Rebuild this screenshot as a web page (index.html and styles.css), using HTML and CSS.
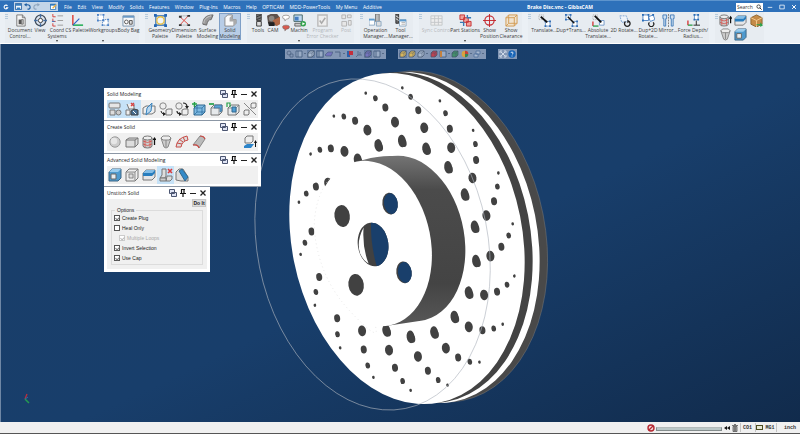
FILE: index.html
```
<!DOCTYPE html>
<html lang="en">
<head>
    <meta charset="UTF-8">
    <meta name="viewport" content="width=device-width, initial-scale=1.0">
    <title>Brake Disc.vnc - GibbsCAM</title>
    <link rel="stylesheet" href="styles.css">
</head>
<body>
    <!-- shared icons -->
    <svg class="sprite" aria-hidden="true">
        <symbol id="doc" viewBox="0 0 14 14"><path d="M3 1h6l3 3v9H3z" fill="#f5f5f5" stroke="#777"/><path d="M9 1v3h3" fill="none" stroke="#777"/><path d="M5 6h3v5H5z" fill="#555"/><path d="M8 6h2v5H8z" fill="#bbb" stroke="#555" stroke-width=".7"/></symbol>
        <symbol id="view" viewBox="0 0 14 14"><circle cx="7" cy="7" r="5.7" fill="#dce4ee" stroke="#46505c" stroke-width="1.3"/><circle cx="7" cy="7" r="2.3" fill="#fff" stroke="#333"/><path d="M7 0v4M7 10v4M0 7h4M10 7h4" stroke="#446ea0" stroke-width="1.5"/></symbol>
        <symbol id="coord" viewBox="0 0 14 14"><path d="M2 0v3h3M2 5v3h3M2 10v3h3" fill="none" stroke="#d43a34"/><path d="M1 8h3" stroke="#3b78c4"/><path d="M7 2h6M7 7h6M7 12h6" stroke="#999"/></symbol>
        <symbol id="cs" viewBox="0 0 14 14"><path d="M2 1v11" stroke="#de3b30" stroke-width="1.5"/><path d="M2 12h11" stroke="#27b05a" stroke-width="1.7"/><path d="M2 12l7-7" stroke="#2f63c4" stroke-width="1.2"/></symbol>
        <symbol id="workgroups" viewBox="0 0 14 14"><path d="M1 1h6v6H1zM6 6h6v6H6z" fill="#fff" stroke="#5f8bc4" stroke-dasharray="1.5 1"/><path d="M0 0h2v2H0zM6 0h2v2H6zM0 6h2v2H0zM6 6h2v2H6zM11 11h2v2h-2zM5 11h2v2H5zM11 5h2v2h-2z" fill="#4c83c8"/></symbol>
        <symbol id="bag" viewBox="0 0 14 14"><path d="M1 2h12v11H1z" fill="#f6f7f8" stroke="#7792ab"/><path d="M1 2h12v2H1z" fill="#6b99c5"/><circle cx="4.7" cy="8.5" r="2" fill="#fff" stroke="#555"/><path d="M8 7h3v4H8z" fill="#ddd" stroke="#555"/></symbol>
        <symbol id="geometry" viewBox="0 0 14 14"><path d="M2 2h10v10H2z" fill="#f8edc4" stroke="#2466b2" stroke-width="1.2"/><circle cx="7" cy="7" r="4" fill="#eff5fa" stroke="#e6bd45" stroke-width="1.5"/><path d="M0 0h3v3H0zM11 0h3v3h-3zM0 11h3v3H0zM11 11h3v3h-3z" fill="#2466b2"/></symbol>
        <symbol id="dimension" viewBox="0 0 14 14"><path d="M2 3l9 8M2 12l9-10" stroke="#e04b43"/><path d="M1 2h3v2H1zM10 1h3v2h-3zM1 11h3v2H1zM10 11h3v2h-3z" fill="#333"/><path d="M3 2h7M3 12h7" stroke="#888" stroke-dasharray="1 1"/></symbol>
        <symbol id="surface" viewBox="0 0 14 14"><path d="M2 11C2 5 5 1 13 1l-2 5c-3 0-4 2-5 6z" fill="#999" stroke="#666"/><path d="M3 10c0-4 3-7 8-8" fill="none" stroke="#ccc"/></symbol>
        <symbol id="solid" viewBox="0 0 14 14"><path d="M1 4l3-3h5v5h4v4l-3 3H1z" fill="#fafafa" stroke="#888"/><path d="M9 1v5h4v4l-3 3V8H6V4z" fill="#aaa"/></symbol>
        <symbol id="tools" viewBox="0 0 14 14"><path d="M5 0h5v7H5z" fill="#777" stroke="#444"/><path d="M5 3l5-2M5 6l5-2M5 8h5v5H5z" fill="#ddd" stroke="#333"/></symbol>
        <symbol id="cam" viewBox="0 0 14 14"><path d="M0 2l4-2h7l3 4-2 8-8 1-3-4z" fill="#5d524d"/><circle cx="5" cy="5" r="3" fill="#8c8883"/><path d="M6 7l8-4v8l-4 2z" fill="#b06846"/><path d="M1 9h7v4H2z" fill="#222"/></symbol>
        <symbol id="chip" viewBox="0 0 14 14"><path d="M1 5q0-3 6-3t6 3q0 4-5 4l-3 3V9Q1 9 1 5z" fill="currentColor" stroke="#6c6460"/></symbol>
        <symbol id="machine" viewBox="0 0 14 14"><path d="M1 1h9v7H1z" fill="#bdd8f0" stroke="#466"/><path d="M2 10h7v3H2z" fill="#ccc" stroke="#666"/><path d="M2 3h4v4H2z" fill="#447ec4"/><circle cx="11" cy="10.5" r="3" fill="#31a24d"/><path d="M10 9l3 1.5-3 1.5z" fill="#fff"/></symbol>
        <symbol id="checker" viewBox="0 0 14 14"><path d="M2 1h10v12H2z" fill="#eee" stroke="#bbb" stroke-width="1.5"/><path d="M4 7l2 3 4-6" fill="none" stroke="#aaa" stroke-width="1.6"/></symbol>
        <symbol id="post" viewBox="0 0 14 14"><path d="M2 1h4v4H2zM8 1h4v3H8zM2 8h5v5H2zM9 7h3v5H9z" fill="#e7e7e7" stroke="#b2b2b2"/></symbol>
        <symbol id="operation" viewBox="0 0 14 14"><path d="M7 0h4v8H7z" fill="#bbb" stroke="#777"/><path d="M0 6h6v6H0z" fill="#fff" stroke="#8ca9c2"/><path d="M0 5h6v2H0z" fill="#5c9bcf"/><path d="M8 8h5v5H8z" fill="#ddd" stroke="#8ca9c2"/></symbol>
        <symbol id="toolmanager" viewBox="0 0 14 14"><path d="M2 0h3v10H2z" fill="#666" stroke="#333"/><path d="M2 2l3 2M2 5l3 2" stroke="#eee"/><path d="M6 6h7v7H6z" fill="#fff" stroke="#8ca9c2"/><path d="M6 6h7v2H6z" fill="#5c9bcf"/><path d="M8 9h4M8 11h4" stroke="#aaa"/></symbol>
        <symbol id="sync" viewBox="0 0 14 14"><path d="M1 2h12v10H1zM1 5h12M1 9h12M5 2v10M9 2v10" fill="#eee" stroke="#c4c7c9"/></symbol>
        <symbol id="stations" viewBox="0 0 14 14"><path d="M1 1h5v5H1zM5 4h5v5H5zM8 8h5v5H8z" fill="#f0a19b" stroke="#c73032"/><path d="M1 9h4v4M9 1v3h4" fill="none" stroke="#3979b4" stroke-width="1.5"/></symbol>
        <symbol id="position" viewBox="0 0 14 14"><circle cx="7" cy="7" r="5" fill="none" stroke="#c4252b" stroke-width="1.2"/><path d="M7 0v14M0 7h14" stroke="#c4252b"/></symbol>
        <symbol id="clearance" viewBox="0 0 14 14"><path d="M1 4l3-3h9v9l-3 3H1zM1 4h9v9M10 4l3-3M4 1v9h9M4 10l-3 3" fill="#f6deb9" fill-opacity=".6" stroke="#d29b51"/></symbol>
        <symbol id="translate" viewBox="0 0 14 14"><path d="M1 1h5v5H1z" fill="none" stroke="#aaa" stroke-dasharray="1 1"/><path d="M8 8h5v5H8z" fill="#fff" stroke="#7198c8"/><path d="M7 7h2v2H7zM12 7h2v2h-2zM7 12h2v2H7zM12 12h2v2h-2z" fill="#356fb5"/><path d="M3 3l7 6" stroke="#111" stroke-width="2"/></symbol>
        <symbol id="duplicate" viewBox="0 0 14 14"><path d="M1 1h5v5H1zM8 8h5v5H8z" fill="#fff" stroke="#7198c8"/><path d="M0 0h2v2H0zM5 0h2v2H5zM0 5h2v2H0zM7 12h2v2H7zM12 7h2v2h-2zM12 12h2v2h-2z" fill="#356fb5"/><path d="M3 3l7 7" stroke="#111" stroke-width="1.7"/></symbol>
        <symbol id="absolute" viewBox="0 0 14 14"><path d="M1 1h5v5H1z" fill="none" stroke="#aaa" stroke-dasharray="1 1"/><path d="M8 7h5v5H8z" fill="#fff" stroke="#7198c8"/><path d="M3 2l7 7" stroke="#111" stroke-width="2"/><path d="M1 8v5" stroke="#d52f2f" stroke-width="1.4"/><path d="M1 13h6" stroke="#2b9d49" stroke-width="1.4"/></symbol>
        <symbol id="rotate" viewBox="0 0 14 14"><path d="M2 2h7l2 6-7 1z" fill="#edf3fa" stroke="#78a0d0" stroke-dasharray="2 1"/><path d="M8 8a3 3 0 1 0 4 0" fill="none" stroke="#222" stroke-width="1.4"/><path d="M10 6l3 2-3 2z" fill="#222"/></symbol>
        <symbol id="duprotate" viewBox="0 0 14 14"><path d="M1 1h6v6H1zM7 3l5-2 2 5-5 2z" fill="#fff" stroke="#4f83c2"/><path d="M0 0h2v2H0zM6 0h2v2H6zM0 6h2v2H0zM11 0h2v2h-2z" fill="#286db7"/><path d="M8 9a2.7 2.7 0 1 0 4 0" fill="none" stroke="#222" stroke-width="1.3"/></symbol>
        <symbol id="mirror" viewBox="0 0 14 14"><path d="M1 1h4v4H4v8H2V5H1zM9 1h4v4h-1v8h-2V5H9z" fill="#cfe0f1" stroke="#427cba"/><path d="M7 0v14" stroke="#777" stroke-dasharray="2 1"/></symbol>
        <symbol id="depth" viewBox="0 0 14 14"><path d="M8 1h4v5H8z" fill="#fff" stroke="#6995c7"/><path d="M7 0h2v2H7zM11 0h2v2h-2zM7 5h2v2H7zM11 5h2v2h-2z" fill="#286db7"/><path d="M7 12h7M10 7v5" stroke="#222"/><path d="M1 7v5" stroke="#d52f2f" stroke-width="1.4"/><path d="M1 12h5" stroke="#2b9d49" stroke-width="1.4"/></symbol>

        <!-- solid operations -->
        <symbol id="extrude" viewBox="0 0 14 14"><path d="M1 3v8q0 2 4.500 2t4.500-2V3z" fill="#ccc" stroke="#777"/><ellipse cx="5.500" cy="3" rx="4.500" ry="2" fill="#eee" stroke="#777"/><path d="M1 6q4.500 3 9 0M1 9q4.500 3 9 0M3 5v7M8 5v7" fill="none" stroke="#d34d47" stroke-width=".8"/><path d="M12.500 10V4" stroke="#111" stroke-width="1.3"/><path d="M10.500 5l2-3 2 3z" fill="#111"/></symbol>
        <symbol id="loft" viewBox="0 0 14 14"><path d="M2 3l3 9q2 2 4 0l3-9z" fill="#ccc" stroke="#888"/><path d="M2 3l2-2h6l2 2-2 2H4zM7 5v7" fill="#eee" stroke="#888"/></symbol>
        <symbol id="slice" viewBox="0 0 14 14"><path d="M1 5l3-3h9v7l-3 3H1z" fill="#e4e5e7" stroke="#777"/><path d="M1 5l3-3h9l-3 3z" fill="#83bde7"/><path d="M1 5h9v3H1zM10 5l3-3v3l-3 3z" fill="#277dbe"/></symbol>
        <symbol id="box" viewBox="0 0 14 14"><path d="M1 4l6-3 6 3v7l-6 3-6-3z" fill="#c58b48" stroke="#8d642f"/><path d="M1 4l6 3 6-3M7 7v7" fill="none" stroke="#f4cc91"/><path d="M7 11h4V9l3 3-3 2v-2H7z" fill="#29a14b"/></symbol>
        <symbol id="shell" viewBox="0 0 14 14"><path d="M1 4l3-3h9v9l-3 3H1z" fill="#4f9ace" stroke="#3d6785"/><path d="M1 4l3-3h9l-3 3z" fill="#9acced"/><path d="M3 6h5v5H3z" fill="#e9edf0" stroke="#666"/></symbol>
        <symbol id="shapes" viewBox="0 0 14 14"><rect x="1" y="1" width="11" height="5" rx="1" fill="#e6e6e6" stroke="#777"/><path d="M2 8h5v5H2z" fill="#ddd" stroke="#777"/><circle cx="10.500" cy="10.500" r="2.500" fill="#ccc" stroke="#777"/></symbol>
        <symbol id="stitch" viewBox="0 0 14 14"><path d="M2 2l2 5h5V2M1 8h4v5H1z" fill="#eee" stroke="#777"/><path d="M6 1l3 3M9 1L6 4" stroke="#d84443" stroke-width="1.4"/><path d="M6 9l3-2 4 1v5H6z" fill="#456d91" stroke="#444"/><path d="M8 9l3 3" stroke="#fff"/></symbol>
        <symbol id="cutplane" viewBox="0 0 14 14"><path d="M1 6l3-2h9v6l-3 2H1z" fill="#eee" stroke="#777"/><path d="M4 13l1-7 5-5-1 8z" fill="#9acaf0" fill-opacity=".6" stroke="#3984be"/></symbol>
        <symbol id="replace" viewBox="0 0 14 14"><circle cx="4" cy="4" r="3.200" fill="#eee" stroke="#888"/><path d="M7 8l2-1h4v5l-1 1H7z" fill="#eee" stroke="#777"/><path d="M2 9q0 3 4 3" fill="none" stroke="#222"/><path d="M4 10l3 2-3 2z" fill="#222"/></symbol>
        <symbol id="swap" viewBox="0 0 14 14"><circle cx="4" cy="4" r="3.200" fill="#eee" stroke="#888"/><path d="M7 8l2-1h4v5l-1 1H7z" fill="#eee" stroke="#777"/><path d="M2 9q0 3 4 3M8 1q4 0 4 4" fill="none" stroke="#222" stroke-width="1.200"/><path d="M4 10l3 2-3 2zM10 4h4l-2 3z" fill="#222"/></symbol>
        <symbol id="union" viewBox="0 0 14 14"><path d="M2 6l3-3h8v7l-3 3H2z" fill="#7fbae2" stroke="#33698f"/><path d="M5 3v7h8M5 10l-3 3M2 6h8v7M10 6l3-3" fill="none" stroke="#24659a" stroke-width=".7"/><path d="M0 2h5M2.500 0v5" stroke="#25a148" stroke-width="1.500"/></symbol>
        <symbol id="subtract" viewBox="0 0 14 14"><path d="M2 6l3-3h8v7l-3 3H2z" fill="#e6e9eb" stroke="#777"/><path d="M2 6h8v7M10 6l3-3" fill="none" stroke="#777" stroke-width=".7"/><path d="M6 3h7v6l-2 1V6H5z" fill="#5ca3d5" stroke="#33698f" stroke-width=".7"/><path d="M0 2h5" stroke="#25a148" stroke-width="1.700"/></symbol>
        <symbol id="intersect" viewBox="0 0 14 14"><path d="M2 6l3-3h8v7l-3 3H2z" fill="#e6e9eb" stroke="#777"/><path d="M2 6h8v7M10 6l3-3" fill="none" stroke="#777" stroke-width=".7"/><path d="M6 5h4v5H6z" fill="#4f9ed5" stroke="#33698f"/><path d="M1 5V1h3v4" fill="none" stroke="#25a148" stroke-width="1.200"/></symbol>
        <symbol id="separate" viewBox="0 0 14 14"><path d="M8 2l1-1h4v4l-1 1H8zM1 9l1-1h4v4l-1 1H1z" fill="#eee" stroke="#777"/><path d="M1 1l12 12" stroke="#888"/></symbol>
        <symbol id="sphere" viewBox="0 0 14 14"><circle cx="7" cy="7" r="5.200" fill="#ccc" stroke="#999"/><circle cx="6" cy="6" r="3.200" fill="#e6e6e6"/></symbol>
        <symbol id="cuboid" viewBox="0 0 14 14"><path d="M1 5l3-2h9v6l-3 3H1z" fill="#ddd" stroke="#777"/><path d="M1 5h9v7M10 5l3-2" fill="none" stroke="#777"/></symbol>
        <symbol id="sweep" viewBox="0 0 14 14"><path d="M1 12Q2 3 12 1l1 4Q7 6 6 12z" fill="#ddd" stroke="#c74b47"/><path d="M2 8l5 1M4 4l4 3M8 2l2 4" stroke="#c74b47"/></symbol>
        <symbol id="trough" viewBox="0 0 14 14"><path d="M1 10l7-9q4 0 5 3l-6 9q-1-4-6-3z" fill="#bbb" stroke="#888"/><path d="M1 10q5-1 6 3M8 1q4 0 5 3" fill="none" stroke="#cc4b46" stroke-width="1.200"/></symbol>
        <symbol id="fromsheet" viewBox="0 0 14 14"><path d="M2 3l2-2h6v5L8 8H2z" fill="#eee" stroke="#777"/><path d="M1 11l3-2h7l-3 4H1z" fill="#2c84c9"/><path d="M12.500 12V7" stroke="#111"/><path d="M11 8l1.500-3L14 8z" fill="#111"/></symbol>
        <symbol id="offset" viewBox="0 0 14 14"><path d="M1 4l3-3h9v9l-3 3H1z" fill="#eee" stroke="#777"/><path d="M1 4h9v9M10 4l3-3M4 6h4v4H4z" fill="#ddd" stroke="#777" stroke-width=".8"/></symbol>
        <symbol id="unstitch" viewBox="0 0 14 14"><path d="M3 1h4v7l-1 2H1l2-3zM8 8h5v3l-2 2H7z" fill="#ddd" stroke="#777"/><path d="M1 10h6v3H1z" fill="#ccc" stroke="#777"/><path d="M9 1l4 4M13 1L9 5" stroke="#d83b3b" stroke-width="1.600"/></symbol>
        <symbol id="chamfer" viewBox="0 0 14 14"><path d="M1 12V4l3-3h4l5 8v4H6z" fill="#ddd" stroke="#777"/><path d="M4 3l3-2 6 8-3 4z" fill="#348ac8" stroke="#31698f"/></symbol>

        <!-- window parts -->
        <symbol id="copy" viewBox="0 0 8 8"><path d="M.5.500h5v4h-5zM2.500 3.500h5v4h-5z" fill="#dfe4f4" stroke="#4b5571"/></symbol>
        <symbol id="pin" viewBox="0 0 8 8"><path d="M2 .500h4M2.500.500v4M5 .500v4M1 4.500h6M4 5v3" fill="none" stroke="#111" stroke-width="1.200"/></symbol>
        <symbol id="minimize" viewBox="0 0 8 8"><path d="M1 4.500h6" stroke="currentColor"/></symbol>
        <symbol id="maximize" viewBox="0 0 8 8"><path d="M1 1.500h6v5H1z" fill="none" stroke="currentColor"/></symbol>
        <symbol id="close" viewBox="0 0 8 8"><path d="M1.500 1.500l5 5M6.500 1.500l-5 5" stroke="currentColor" stroke-width="1.300"/></symbol>
        <symbol id="save" viewBox="0 0 8 8"><path d="M.5.500h7v7h-7z" fill="#f7fafc" stroke="#235f9f"/><path d="M1 1h6v2H1zM2 5h4v3H2z" fill="#387fc0"/></symbol>
        <symbol id="undo" viewBox="0 0 8 8"><path d="M2 2h2q3 0 3 3 0 2-3 2" fill="none" stroke="currentColor" stroke-width="1.300"/><path d="M3 0v4L0 2z" fill="currentColor"/></symbol>
        <symbol id="redo" viewBox="0 0 8 8"><path d="M6 2H4Q1 2 1 5q0 2 3 2" fill="none" stroke="currentColor" stroke-width="1.300"/><path d="M5 0v4l3-2z" fill="currentColor"/></symbol>
        <symbol id="edit" viewBox="0 0 8 8"><path d="M.5 1.500h6v6h-6z" fill="#fff" stroke="#337abb"/><path d="M0 1h7v2H0z" fill="#337abb"/><path d="M3 6l4-4" stroke="#efb241" stroke-width="1.500"/></symbol>

        <!-- canvas toolbar -->
        <symbol id="link" viewBox="0 0 8 8"><circle cx="3" cy="3" r="2" fill="none" stroke="#4f6585" stroke-width=".8"/><path d="M4 4h3v3H4z" fill="none" stroke="#4f6585" stroke-width=".8"/></symbol>
        <symbol id="frame" viewBox="0 0 8 8"><path d="M1 1h6v6H1zM3 1v6" fill="#9aacc6" stroke="#3f587b" stroke-width=".8"/></symbol>
        <symbol id="orange" viewBox="0 0 8 8"><path d="M1 1h6v6H1z" fill="#9aacc6" stroke="#3f587b" stroke-width=".8"/><path d="M1 1h2v6H1z" fill="#c4813f"/></symbol>
        <symbol id="sheet" viewBox="0 0 8 8"><path d="M0 5l3-3h5L6 6H1z" fill="currentColor" stroke="#455a7a" stroke-width=".6"/></symbol>
        <symbol id="windows" viewBox="0 0 8 8"><path d="M3 1h4v3H3zM1 4h4v3H1z" fill="#a7b8cf" stroke="#4f6f9c" stroke-width=".8"/></symbol>
        <symbol id="corner" viewBox="0 0 8 8"><path d="M1 2h5v5" fill="none" stroke="#4f6585"/></symbol>
        <symbol id="axes" viewBox="0 0 8 8"><path d="M3 1v4h4M3 5L1 7M5 2v3" fill="none" stroke="#4f6585" stroke-width=".8"/></symbol>
        <symbol id="flag" viewBox="0 0 8 8"><path d="M1 1h3v6H1z" fill="#2d61a8"/><path d="M3 1h4v4H3z" fill="#c42f3c"/></symbol>
        <symbol id="cube" viewBox="0 0 8 8"><path d="M1 3l2-2h4v4L5 7H1z" fill="currentColor" stroke="#43536a" stroke-width=".7"/><path d="M1 3h4v4M5 3l2-2" fill="none" stroke="#43536a" stroke-width=".5"/></symbol>
        <symbol id="ball" viewBox="0 0 8 8"><circle cx="4" cy="4" r="3.300" fill="#d8a23e"/><path d="M4 4V.700A3.300 3.300 0 0 1 7.300 4z" fill="#c2413c"/><path d="M4 4h3.300A3.300 3.300 0 0 1 4 7.300z" fill="#35855b"/></symbol>
        <symbol id="fit" viewBox="0 0 8 8"><path d="M1 3V1h2M5 1h2v2M7 5v2H5M3 7H1V5M2 2l4 4M6 2L2 6" fill="none" stroke="#e2eaf4" stroke-width=".8"/></symbol>
        <symbol id="help" viewBox="0 0 8 8"><circle cx="4" cy="4" r="3.700" fill="#1764b7"/><path d="M3 3q0-1 1-1t1 1q0 1-1 1.500M4 5.500v1" fill="none" stroke="#fff" stroke-width=".8"/></symbol>
    </svg>

    <header class="titlebar">
        <svg class="logo" viewBox="0 0 8 8"><path d="M6 2.500A2.500 2.500 0 1 0 6.300 5H4" fill="none" stroke="#fff" stroke-width="1.400"/></svg>
        <div class="quick">
            <button aria-label="Save"><svg><use href="#save"/></svg></button>
            <button aria-label="Undo"><svg><use href="#undo"/></svg></button>
            <button class="faded" aria-label="Redo"><svg><use href="#redo"/></svg></button>
            <button class="last" aria-label="Edit"><svg><use href="#edit"/></svg></button>
        </div>
        <nav class="menu">
            <a href="#">File</a><a href="#">Edit</a><a href="#">View</a><a href="#">Modify</a><a href="#">Solids</a><a href="#">Features</a><a href="#">Window</a><a href="#">Plug-Ins</a><a href="#">Macros</a><a href="#">Help</a><a href="#">OPTICAM</a><a href="#">MDD-PowerTools</a><a href="#">My Menu</a><a href="#">Additive</a>
        </nav>
        <div class="file-name">Brake Disc.vnc - GibbsCAM</div>
        <label class="search"><input type="text" placeholder="Search" aria-label="Search"><svg viewBox="0 0 8 8"><circle cx="3.500" cy="3.500" r="2.300" fill="none" stroke="#222"/><path d="M5.200 5.200L7.500 7.500" stroke="#222" stroke-width="1.200"/></svg></label>
        <div class="window-buttons">
            <button aria-label="Minimize"><svg><use href="#minimize"/></svg></button>
            <button aria-label="Maximize"><svg><use href="#maximize"/></svg></button>
            <button aria-label="Close"><svg><use href="#close"/></svg></button>
        </div>
    </header>

    <div class="ribbon">
        <div class="group group-view">
            <i class="grip"></i>
            <button class="tool"><svg><use href="#doc"/></svg>Document<br>Control...</button>
            <button class="tool"><svg><use href="#view"/></svg>View</button>
            <button class="tool drop"><svg><use href="#coord"/></svg>Coord<br>Systems</button>
            <button class="tool"><svg><use href="#cs"/></svg>CS Palette</button>
            <button class="tool drop"><svg><use href="#workgroups"/></svg>Workgroups</button>
            <button class="tool"><svg><use href="#bag"/></svg>Body Bag</button>
        </div>
        <div class="group group-palettes">
            <i class="grip"></i>
            <button class="tool"><svg><use href="#geometry"/></svg>Geometry<br>Palette</button>
            <button class="tool"><svg><use href="#dimension"/></svg>Dimension<br>Palette</button>
            <button class="tool"><svg><use href="#surface"/></svg>Surface<br>Modeling</button>
            <button class="tool active"><svg><use href="#solid"/></svg>Solid<br>Modeling</button>
        </div>
        <div class="group group-machine">
            <i class="grip"></i>
            <button class="tool"><svg><use href="#tools"/></svg>Tools</button>
            <button class="tool"><svg><use href="#cam"/></svg>CAM</button>
            <div class="chips">
                <button aria-label="Comment"><svg><use href="#chip"/></svg></button>
                <button class="red" aria-label="Remove comment"><svg><use href="#chip"/></svg></button>
            </div>
            <button class="tool drop"><svg><use href="#machine"/></svg>Machin</button>
            <button class="tool" disabled><svg><use href="#checker"/></svg>Program<br>Error Checker</button>
            <button class="tool" disabled><svg><use href="#post"/></svg>Post</button>
        </div>
        <div class="group group-managers">
            <i class="grip"></i>
            <button class="tool"><svg><use href="#operation"/></svg>Operation<br>Manager...</button>
            <button class="tool"><svg><use href="#toolmanager"/></svg>Tool<br>Manager...</button>
        </div>
        <div class="group group-stations">
            <i class="grip"></i>
            <button class="tool" disabled><svg><use href="#sync"/></svg>Sync Control</button>
            <button class="tool drop"><svg><use href="#stations"/></svg>Part Stations</button>
            <button class="tool"><svg><use href="#position"/></svg>Show<br>Position</button>
            <button class="tool"><svg><use href="#clearance"/></svg>Show<br>Clearance</button>
        </div>
        <div class="group group-transform">
            <i class="grip"></i>
            <button class="tool"><svg><use href="#translate"/></svg>Translate...</button>
            <button class="tool"><svg><use href="#duplicate"/></svg>Dup+Trans...</button>
            <button class="tool"><svg><use href="#absolute"/></svg>Absolute<br>Translate...</button>
            <button class="tool"><svg><use href="#rotate"/></svg>2D Rotate...</button>
            <button class="tool"><svg><use href="#duprotate"/></svg>Dup+2D<br>Rotate...</button>
            <button class="tool"><svg><use href="#mirror"/></svg>Mirror...</button>
            <button class="tool"><svg><use href="#depth"/></svg>Force Depth/<br>Radius...</button>
        </div>
        <div class="group group-solids">
            <i class="grip"></i>
            <div class="solids">
                <button aria-label="Extrude"><svg><use href="#extrude"/></svg></button>
                <button aria-label="Slice"><svg><use href="#slice"/></svg></button>
                <button aria-label="Export solid"><svg><use href="#box"/></svg></button>
                <button aria-label="Loft"><svg><use href="#loft"/></svg></button>
                <button aria-label="Shell"><svg><use href="#shell"/></svg></button>
            </div>
        </div>
    </div>

    <main class="workspace">
        <svg class="model" viewBox="0 43 800 379" role="img" aria-label="Brake disc">
            <defs>
                <ellipse id="rim" rx="115.600" ry="167.700" transform="rotate(-11.250)"/>
                <ellipse id="hub" rx="57.800" ry="83.800" transform="rotate(-11.250)"/>
                <linearGradient id="hubShade" x1="0" y1="0" x2="0" y2="1">
                    <stop offset="0" stop-color="#747474"/>
                    <stop offset=".2" stop-color="#4b4b4b"/>
                    <stop offset=".75" stop-color="#444"/>
                    <stop offset="1" stop-color="#585858"/>
                </linearGradient>
                <clipPath id="bore"><ellipse cx="373" cy="244" rx="15.300" ry="22" transform="rotate(-8 373 244)"/></clipPath>
            </defs>

            <g transform="translate(430 236)"><use href="#rim" fill="#494949" stroke="#777" stroke-width=".5"/></g>
            <g transform="translate(422 237)"><use href="#rim" fill="#fff"/></g>
            <g transform="translate(415 237)"><use href="#rim" fill="#434343"/></g>
            <g transform="translate(407 238)"><use href="#rim" fill="#fff"/></g>
            <g id="holes" fill="#414141" transform="translate(250 60) scale(.3333)"></g>

            <path d="M358.500 160.400L364 159q15-4 28-3.600A57.800 83.800 -11.250 0 1 421 320.600L387.500 325.600z" fill="url(#hubShade)"/>
            <g transform="translate(373 243)"><use href="#hub" fill="#fff"/></g>
            <path d="M329 178Q314 198 314 228Q318 277 350 311T375 325" fill="none" stroke="#ddd" stroke-width=".7" stroke-dasharray="1 3"/>

            <g fill="#414141">
                <ellipse cx="342" cy="215.500" rx="7.700" ry="11" transform="rotate(-8 342 215.500)"/>
                <ellipse cx="356" cy="284.500" rx="7.700" ry="11" transform="rotate(-8 356 284.500)"/>
                <ellipse cx="390" cy="203" rx="7.700" ry="11" transform="rotate(-8 390 203)"/>
                <ellipse cx="404" cy="272" rx="7.700" ry="11" transform="rotate(-8 404 272)"/>
            </g>
            <g fill="#193f6b">
                <ellipse cx="390.800" cy="203" rx="6.900" ry="10.500" transform="rotate(-8 390.800 203)"/>
                <ellipse cx="404.800" cy="272" rx="6.900" ry="10.500" transform="rotate(-8 404.800 272)"/>
            </g>
            <g clip-path="url(#bore)">
                <path d="M350 215h50v60h-50z" fill="#414141"/>
                <path d="M363.500 227Q356 241 360 253Q363 260 368.500 263Q362 247 363.500 227z" fill="#fff"/>
                <path d="M371 218Q370 246 378 270H400V218z" fill="#193f6b"/>
            </g>
            <g transform="translate(372.500 244)"><use href="#rim" fill="none" stroke="#aeb4bd" stroke-width=".6"/></g>

            <path d="M26 394l-2 5" stroke="#bd2f3b" stroke-width="1.300"/>
            <path d="M24 399l4 4" stroke="#259b50" stroke-width="1.500"/>
            <path d="M24 399l3-2" stroke="#3268a5"/>
        </svg>

        <div class="floating-bars">
            <div class="bar bar-select">
                <svg><use href="#link"/></svg><svg><use href="#frame"/></svg><i></i>
                <svg class="on"><use href="#cube"/></svg><svg class="on"><use href="#frame"/></svg>
                <svg class="violet"><use href="#sheet"/></svg><svg><use href="#corner"/></svg><i></i>
                <svg><use href="#flag"/></svg><svg><use href="#axes"/></svg>
                <svg class="on violet"><use href="#cube"/></svg><svg><use href="#frame"/></svg><i></i>
            </div>
            <div class="bar bar-shade">
                <svg class="on gold"><use href="#cube"/></svg><svg class="gold"><use href="#cube"/></svg><svg><use href="#cube"/></svg><i></i>
                <svg class="red"><use href="#cube"/></svg><svg><use href="#orange"/></svg><i></i>
                <svg class="green"><use href="#cube"/></svg><svg><use href="#ball"/></svg><i></i>
                <svg><use href="#windows"/></svg><i></i>
            </div>
            <div class="bar bar-help">
                <svg><use href="#fit"/></svg><svg><use href="#help"/></svg>
            </div>
        </div>

        <div class="panels">
            <section class="panel">
                <header><h2>Solid Modeling</h2>
                    <button aria-label="Copy"><svg><use href="#copy"/></svg></button><button aria-label="Pin"><svg><use href="#pin"/></svg></button><button aria-label="Minimize"><svg><use href="#minimize"/></svg></button><button aria-label="Close"><svg><use href="#close"/></svg></button>
                </header>
                <div class="palette">
                    <button class="active" aria-label="Create solid"><svg><use href="#shapes"/></svg></button>
                    <button class="active" aria-label="Advanced solid modeling"><svg><use href="#stitch"/></svg></button>
                    <button aria-label="Slice"><svg><use href="#cutplane"/></svg></button>
                    <button aria-label="Replace"><svg><use href="#replace"/></svg></button>
                    <button aria-label="Swap"><svg><use href="#swap"/></svg></button>
                    <button aria-label="Union"><svg><use href="#union"/></svg></button>
                    <button aria-label="Subtract"><svg><use href="#subtract"/></svg></button>
                    <button aria-label="Intersect"><svg><use href="#intersect"/></svg></button>
                    <button aria-label="Separate"><svg><use href="#separate"/></svg></button>
                </div>
            </section>
            <section class="panel">
                <header><h2>Create Solid</h2>
                    <button aria-label="Copy"><svg><use href="#copy"/></svg></button><button aria-label="Pin"><svg><use href="#pin"/></svg></button><button aria-label="Minimize"><svg><use href="#minimize"/></svg></button><button aria-label="Close"><svg><use href="#close"/></svg></button>
                </header>
                <div class="palette">
                    <button aria-label="Sphere"><svg><use href="#sphere"/></svg></button>
                    <button aria-label="Cuboid"><svg><use href="#cuboid"/></svg></button>
                    <button aria-label="Extrude"><svg><use href="#extrude"/></svg></button>
                    <button aria-label="Loft"><svg><use href="#loft"/></svg></button>
                    <button aria-label="Sweep"><svg><use href="#sweep"/></svg></button>
                    <button aria-label="Swept surface"><svg><use href="#trough"/></svg></button>
                    <button class="end" aria-label="Solid from sheet"><svg><use href="#fromsheet"/></svg></button>
                </div>
            </section>
            <section class="panel">
                <header><h2>Advanced Solid Modeling</h2>
                    <button aria-label="Copy"><svg><use href="#copy"/></svg></button><button aria-label="Pin"><svg><use href="#pin"/></svg></button><button aria-label="Minimize"><svg><use href="#minimize"/></svg></button><button aria-label="Close"><svg><use href="#close"/></svg></button>
                </header>
                <div class="palette">
                    <button aria-label="Shell"><svg><use href="#shell"/></svg></button>
                    <button aria-label="Offset"><svg><use href="#offset"/></svg></button>
                    <button aria-label="Slice"><svg><use href="#slice"/></svg></button>
                    <button class="active" aria-label="Unstitch"><svg><use href="#unstitch"/></svg></button>
                    <button aria-label="Chamfer"><svg><use href="#chamfer"/></svg></button>
                </div>
            </section>
            <section class="panel dialog">
                <header><h2>Unstitch Solid</h2>
                    <button aria-label="Copy"><svg><use href="#copy"/></svg></button><button aria-label="Pin"><svg><use href="#pin"/></svg></button><button aria-label="Minimize"><svg><use href="#minimize"/></svg></button><button aria-label="Close"><svg><use href="#close"/></svg></button>
                </header>
                <form class="dialog-body">
                    <button class="do-it" type="button">Do It</button>
                    <fieldset>
                        <legend>Options</legend>
                        <label><input type="checkbox" checked>Create Plug</label>
                        <label><input type="checkbox">Heal Only</label>
                        <label class="sub"><input type="checkbox" checked disabled>Multiple Loops</label>
                        <label><input type="checkbox" checked>Invert Selection</label>
                        <label><input type="checkbox" checked>Use Cap</label>
                    </fieldset>
                </form>
            </section>
        </div>
    </main>

    <footer class="statusbar">
        <svg viewBox="0 0 8 8"><circle cx="4" cy="4" r="3" fill="#f3dcdc" stroke="#b52831" stroke-width="1.400"/><path d="M2 6l4-4" stroke="#b52831" stroke-width="1.300"/></svg>
        <div class="progress"></div>
        <svg viewBox="0 0 8 8"><path d="M1 4l3-2v4zM4 4l3-2v4z" fill="#111"/></svg>
        <svg viewBox="0 0 8 8"><path d="M1 1.500h6M3 .500h2M2 2.500h4v5H2zM3.300 3v4M4.700 3v4" fill="#bbb" stroke="#555" stroke-width=".8"/></svg>
        <span class="cell cs">CO1</span>
        <span class="cell mg"><i></i>MG1</span>
        <span class="cell unit">inch</span>
    </footer>
    <script src="script.js"></script>
</body>
</html>
```

FILE: styles.css
```
* {
    box-sizing: border-box;
}
body {
    margin: 0;
    height: 100vh;
    display: flex;
    flex-direction: column;
    font-family: "Open Sans", "Noto Sans", sans-serif;
    font-size: 5px;
    line-height: 6px;
    color: #333;
    background-color: #f0f0f0;
    overflow: hidden;
}
button {
    padding: 0;
    border: 0;
    background: none;
    font: inherit;
    color: inherit;
    display: flex;
    align-items: center;
    justify-content: center;
}
svg {
    display: block;
    flex: none;
}
.sprite {
    display: none;
}

/* title bar */
.titlebar {
    position: relative;
    flex: none;
    height: 12px;
    display: flex;
    align-items: center;
    background-color: #2e71ba;
    border-top: 1px solid #5d94cd;
    color: #fff;
}
.logo {
    width: 6px;
    height: 6px;
    margin: 0 5px 0 3px;
}
.quick {
    width: 44px;
    height: 9px;
    display: flex;
    align-items: center;
    gap: 2px;
    padding: 0 1px;
    background-color: #c3d5e8;
    color: #1b5ca2;
}
.quick svg {
    width: 7px;
    height: 7px;
}
.quick .faded {
    color: #8ea4bd;
}
.quick .last {
    margin-left: auto;
}
.menu {
    width: 318px;
    display: flex;
    justify-content: space-between;
    margin-left: 6px;
    white-space: nowrap;
}
.menu a {
    color: #fff;
    text-decoration: none;
}
.file-name {
    position: absolute;
    left: 0;
    right: 0;
    padding-left: 40%;
    text-align: center;
    font-weight: bold;
    pointer-events: none;
}
.search {
    width: 27px;
    height: 8px;
    display: flex;
    align-items: center;
    margin-left: auto;
    padding: 0 1px;
    background-color: #fff;
}
.search input {
    flex: 1;
    min-width: 0;
    padding: 0;
    border: 0;
    background: none;
    font: inherit;
}
.search input::placeholder {
    color: #333;
}
.search svg {
    width: 6px;
    height: 6px;
}
.window-buttons {
    display: flex;
    gap: 6px;
    margin: 0 3px 0 4px;
}
.window-buttons svg {
    width: 6px;
    height: 6px;
}

/* ribbon */
.ribbon {
    flex: none;
    height: 32px;
    display: flex;
    gap: 6px;
    padding: 0 5px;
    background-color: #ebf0f5;
    border-bottom: 1px solid #fff;
    color: #3d3d40;
}
.group {
    display: grid;
    padding-top: 1px;
    background-color: #e7ecf1;
}
.group-view {
    grid-template-columns: 3px 24px 16px 18px 22px 30px 21px;
}
.group-palettes {
    grid-template-columns: 3px 24px 24px 23px 22px;
}
.group-machine {
    grid-template-columns: 3px 16px 14px 11px 16px 31px 16px;
}
.group-managers {
    grid-template-columns: 3px 25px 25px;
}
.group-stations {
    grid-template-columns: 3px 29px 28px 21px 22px;
}
.group-transform {
    grid-template-columns: 3px 26px 28px 26px 26px 22px 18px 32px;
}
.group-solids {
    grid-template-columns: 3px 46px;
}
.grip {
    height: 6px;
    margin-top: 1px;
    background: repeating-linear-gradient(#b6cbdd 0 1px, transparent 1px 2px);
}
.tool {
    height: 27px;
    flex-direction: column;
    justify-content: flex-start;
    padding-top: 1px;
    white-space: nowrap;
    position: relative;
}
.tool svg {
    width: 13px;
    height: 13px;
}
.tool:disabled {
    color: #b5b8bc;
}
.tool.active {
    background-color: #b8cde6;
    outline: 1px solid #7e9fc7;
    outline-offset: -1px;
}
.drop::after {
    content: "";
    position: absolute;
    top: 27px;
    border: 1px solid transparent;
    border-top: 2px solid #333;
}
.chips {
    display: flex;
    flex-direction: column;
    align-items: center;
    gap: 2px;
    padding-top: 1px;
    color: #fff;
}
.chips svg {
    width: 8px;
    height: 8px;
}
.chips .red {
    color: #d85b50;
}
.solids {
    display: grid;
    grid-template-columns: repeat(3, 1fr);
    align-content: start;
    gap: 1px;
    padding-top: 1px;
}
.solids svg {
    width: 13px;
    height: 13px;
}

/* canvas */
.workspace {
    position: relative;
    flex: 1;
    min-height: 0;
    background: linear-gradient(155deg, #1a3e69 0%, #183e6b 55%, #112b4c 100%);
    border-left: 1px solid #6f87a5;
}
.model {
    position: absolute;
    top: 0;
    left: -1px;
    width: calc(100% + 1px);
    height: 100%;
}
.floating-bars {
    position: relative;
    display: flex;
    justify-content: center;
    gap: 12px;
    padding-top: 5px;
}
.bar {
    height: 10px;
    display: flex;
    align-items: center;
    justify-content: space-between;
    padding: 0 1px;
    background-color: #8397b5;
    color: #a7b8cf;
}
.bar svg {
    width: 8px;
    height: 8px;
}
.bar i {
    border: 1px solid transparent;
    border-top: 1px solid #2c4261;
}
.bar .on {
    background-color: #667fa4;
}
.bar .red {
    color: #bd4350;
}
.bar .gold {
    color: #d6b55d;
}
.bar .green {
    color: #43906b;
}
.bar .violet {
    color: #7474bd;
}
.bar-select {
    width: 101px;
}
.bar-shade {
    width: 88px;
}
.bar-help {
    width: 19px;
}

/* tool panels */
.panels {
    position: absolute;
    top: 44px;
    left: 103px;
    width: 157px;
}
.panel {
    height: 33px;
    padding: 0 3px;
    background-color: #fff;
    border-bottom: 1px solid #8c97a5;
    color: #222;
}
.panel header {
    height: 12px;
    display: flex;
    align-items: center;
    gap: 2px;
}
.panel header svg {
    width: 8px;
    height: 8px;
}
.panel h2 {
    flex: 1;
    margin: 0;
    font-size: 5px;
    font-weight: normal;
}
.palette {
    height: 18px;
    display: grid;
    grid-template-columns: repeat(9, 1fr);
    background-color: #f0f0f0;
}
.palette svg {
    width: 14px;
    height: 14px;
}
.palette .active {
    background-color: #c6e2f7;
}
.palette .end {
    grid-column: 9;
}
.dialog {
    width: 106px;
    height: auto;
    padding-bottom: 3px;
    border-bottom: 0;
}
.dialog-body {
    padding: 0 4px 4px;
    background-color: #f0f0f0;
    font-family: "Liberation Sans Narrow", "Liberation Sans", sans-serif;
}
.do-it {
    width: 14px;
    height: 8px;
    margin: 0 -3px 0 auto;
    background-color: #dcdcdc;
    border: 1px solid #c6c6c6;
    font-weight: bold;
}
fieldset {
    margin: 0;
    padding: 0 2px 1px;
    border: 1px solid #dcdcdc;
}
legend {
    margin-left: 1px;
    padding: 0 2px;
}
fieldset label {
    height: 10px;
    display: flex;
    align-items: center;
    gap: 2px;
}
fieldset .sub {
    padding-left: 5px;
    color: #aaa;
}
input[type="checkbox"] {
    appearance: none;
    width: 6px;
    height: 6px;
    margin: 0;
    display: grid;
    place-items: center;
    border: 1px solid #555;
    background-color: #fff;
}
input[type="checkbox"]:checked::after {
    content: "";
    width: 2px;
    height: 3px;
    border: solid #777;
    border-width: 0 1px 1px 0;
    transform: rotate(45deg);
}
input[type="checkbox"]:disabled {
    border-color: #ccc;
}
input[type="checkbox"]:disabled::after {
    border-color: #bbb;
}

/* status bar */
.statusbar {
    flex: none;
    height: 12px;
    display: flex;
    align-items: center;
    justify-content: flex-end;
    background-color: #f0f0f0;
    border-bottom: 1px solid #555;
    font-family: "Liberation Mono", monospace;
    font-weight: bold;
}
.statusbar svg {
    width: 8px;
    height: 8px;
}
.progress {
    width: 66px;
    height: 4px;
    margin: 3px 1px 0;
    background-color: #bcc8c8;
    border: 1px solid #858d8d;
    border-top-color: #b5bbbb;
}
.cell {
    height: 9px;
    display: flex;
    align-items: center;
    justify-content: center;
    gap: 2px;
    margin-left: 1px;
    border-left: 1px solid #c4c4c4;
}
.cell i {
    width: 7px;
    height: 5px;
    border: 1px solid #4c4c20;
    background-color: #e9e9d5;
}
.cs {
    width: 14px;
}
.mg {
    width: 20px;
}
.unit {
    width: 24px;
    justify-content: flex-end;
    padding-right: 4px;
}
```

FILE: script.js
```
// Each arm runs from the rim to the hub: x, y of the drilled holes
const arms = [
    [347, 97, 376, 112, 406, 140, 435, 184, 456, 241],
    [457, 81, 482, 108, 505, 148, 523, 201, 529, 264],
    [570, 120, 587, 157, 600, 204, 604, 261, 595, 320],
    [670, 209, 677, 250, 679, 298, 668, 352, 645, 402],
    [746, 337, 743, 378, 733, 422, 710, 465, 675, 499],
    [789, 490, 777, 525, 755, 559, 722, 587, 679, 602],
    [794, 647, 772, 673, 742, 694, 703, 704, 657, 697],
    [759, 792, 732, 805, 698, 810, 657, 800, 614, 770],
    [689, 906, 660, 905, 625, 892, 588, 864, 553, 817],
    [593, 975, 565, 960, 534, 932, 504, 889, 482, 830],
    [482, 991, 458, 963, 435, 923, 417, 870, 409, 811],
    [370, 952, 353, 916, 341, 868, 336, 812],
    [270, 863, 262, 822, 261, 774],
    [194, 735, 197, 695, 207, 650],
    [151, 582, 164, 547, 184, 513],
    [146, 425, 168, 399, 197, 378, 234, 367],
    [181, 280, 209, 267, 242, 263, 283, 272, 323, 297],
    [251, 166, 281, 167, 315, 180, 352, 208, 385, 254]
];
const sizes = [[4, 5], [7, 9], [9, 12], [12, 16], [12, 19]];
const holes = document.getElementById('holes');

function addHole(x, y, rx, ry) {
    const hole = document.createElementNS('http://www.w3.org/2000/svg', 'ellipse');
    hole.setAttribute('cx', x);
    hole.setAttribute('cy', y);
    hole.setAttribute('rx', rx);
    hole.setAttribute('ry', ry);
    hole.setAttribute('transform', `rotate(-8 ${x} ${y})`);
    holes.appendChild(hole);
}

arms.forEach(arm => {
    for (let i = 0; i < arm.length; i += 2) {
        const [rx, ry] = sizes[i / 2];
        addHole(arm[i], arm[i + 1], rx, ry);
        // the deepest holes show the far wall too
        if (i === 8) {
            addHole(arm[i] + 5, arm[i + 1] + 6, 9, 12);
        }
    }
});
```
